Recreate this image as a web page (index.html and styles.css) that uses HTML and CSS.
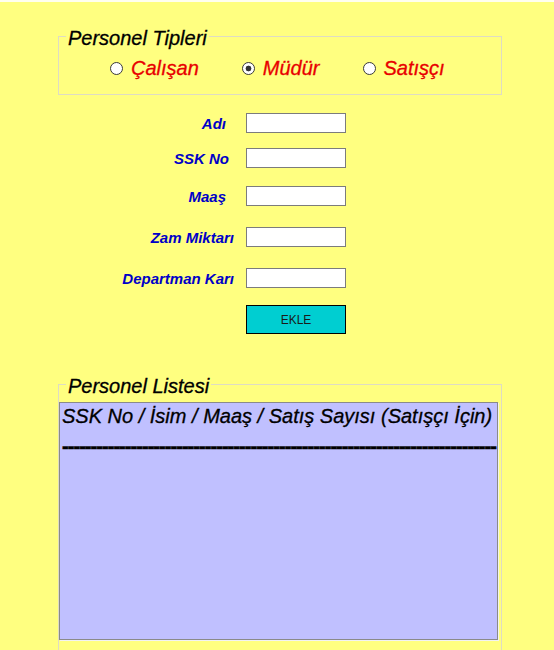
FILE: index.html
```html
<!DOCTYPE html>
<html lang="tr">
<head>
<meta charset="utf-8">
<title>Personel</title>
<link rel="stylesheet" href="styles.css">
</head>
<body>
<div class="page">
  <fieldset class="group">
    <legend class="group-title">Personel Tipleri</legend>
    <div class="radio-row">
      <label class="radio-item"><input type="radio" name="tip" class="radio"><span>Çalışan</span></label>
      <label class="radio-item"><input type="radio" name="tip" class="radio" checked><span>Müdür</span></label>
      <label class="radio-item"><input type="radio" name="tip" class="radio"><span>Satışçı</span></label>
    </div>
  </fieldset>

  <form class="entry">
    <div class="field"><label class="field-label pad-8">Adı</label><input class="field-input" type="text"></div>
    <div class="field gap-15"><label class="field-label pad-5">SSK No</label><input class="field-input" type="text"></div>
    <div class="field gap-18"><label class="field-label pad-8">Maaş</label><input class="field-input" type="text"></div>
    <div class="field gap-21"><label class="field-label">Zam Miktarı</label><input class="field-input" type="text"></div>
    <div class="field gap-21"><label class="field-label">Departman Karı</label><input class="field-input" type="text"></div>
    <div class="field gap-17"><span class="field-label"></span><button type="button" class="add-btn">EKLE</button></div>
  </form>

  <fieldset class="group list-group">
    <legend class="group-title">Personel Listesi</legend>
    <div class="list-box">
      <div class="list-head">SSK No / İsim / Maaş / Satış Sayısı (Satışçı İçin)</div>
      <div class="list-rule">----------------------------------------------------------------------------</div>
    </div>
  </fieldset>
</div>
</body>
</html>
```

FILE: styles.css
```css
html, body {
  background: #ffff80;
}
body {
  margin: 0;
  border-top: 2px solid #fffff0;
  font-family: "Liberation Sans", Arial, sans-serif;
}
.page {
  padding: 21px 52px 0 58px;
}
.group {
  margin: 0;
  padding: 0;
  border: 1px solid #dedcc4;
  min-width: 0;
}
.group-title {
  margin-left: 7px;
  padding: 4px 2px 0 2px;
  font-style: italic;
  font-size: 20px;
  line-height: 22px;
  color: #000;
  -webkit-text-stroke: 0.3px #000;
}
.radio-row {
  display: flex;
  gap: 43px;
  padding: 8px 0 14px 51px;
}
.radio-item {
  display: flex;
  align-items: center;
  gap: 8px;
  font-style: italic;
  font-size: 20px;
  line-height: 23px;
  color: #e80000;
  -webkit-text-stroke: 0.3px #e80000;
}
.radio {
  appearance: none;
  -webkit-appearance: none;
  margin: 0;
  width: 13px;
  height: 13px;
  border: 1px solid #3a3a3a;
  border-radius: 50%;
  background: #fff;
}
.radio:checked {
  background: radial-gradient(circle, #333 0 2.6px, #fff 3.2px);
}
.entry {
  margin-top: 18px;
  display: flex;
  flex-direction: column;
}
.field {
  display: grid;
  grid-template-columns: 176px 100px;
  column-gap: 12px;
  align-items: center;
}
.gap-15 { margin-top: 15px; }
.gap-17 { margin-top: 17px; }
.gap-18 { margin-top: 18px; }
.gap-21 { margin-top: 21px; }
.field-label {
  text-align: right;
  font-weight: bold;
  font-style: italic;
  font-size: 15px;
  color: #0000c8;
}
.pad-5 { padding-right: 5px; }
.pad-8 { padding-right: 8px; }
.field-input {
  box-sizing: border-box;
  width: 100px;
  height: 20px;
  margin: 0;
  border: 1px solid #7c7c7c;
  background: #fff;
}
.add-btn {
  box-sizing: border-box;
  width: 100px;
  height: 29px;
  margin: 0;
  border: 1px solid #000;
  background: #00ced1;
  font-family: "Liberation Sans", Arial, sans-serif;
  font-size: 12px;
  color: #1a1a1a;
}
.list-group {
  margin-top: 37px;
  padding-bottom: 30px;
}
.list-box {
  box-sizing: border-box;
  margin-top: 5px;
  width: 439px;
  height: 238px;
  padding: 2px;
  background: #c0c0ff;
  border: 1px solid #8a8a8a;
  box-shadow: 1px 1px 0 #f2f2f2;
  overflow: hidden;
}
.list-head {
  font-style: italic;
  font-size: 20px;
  line-height: 23px;
  color: #000;
  -webkit-text-stroke: 0.3px #000;
  white-space: nowrap;
}
.list-rule {
  margin-top: 7px;
  font-weight: bold;
  font-size: 20px;
  line-height: 23px;
  letter-spacing: -0.95px;
  color: #000;
  -webkit-text-stroke: 0.5px #000;
  white-space: nowrap;
}
```
